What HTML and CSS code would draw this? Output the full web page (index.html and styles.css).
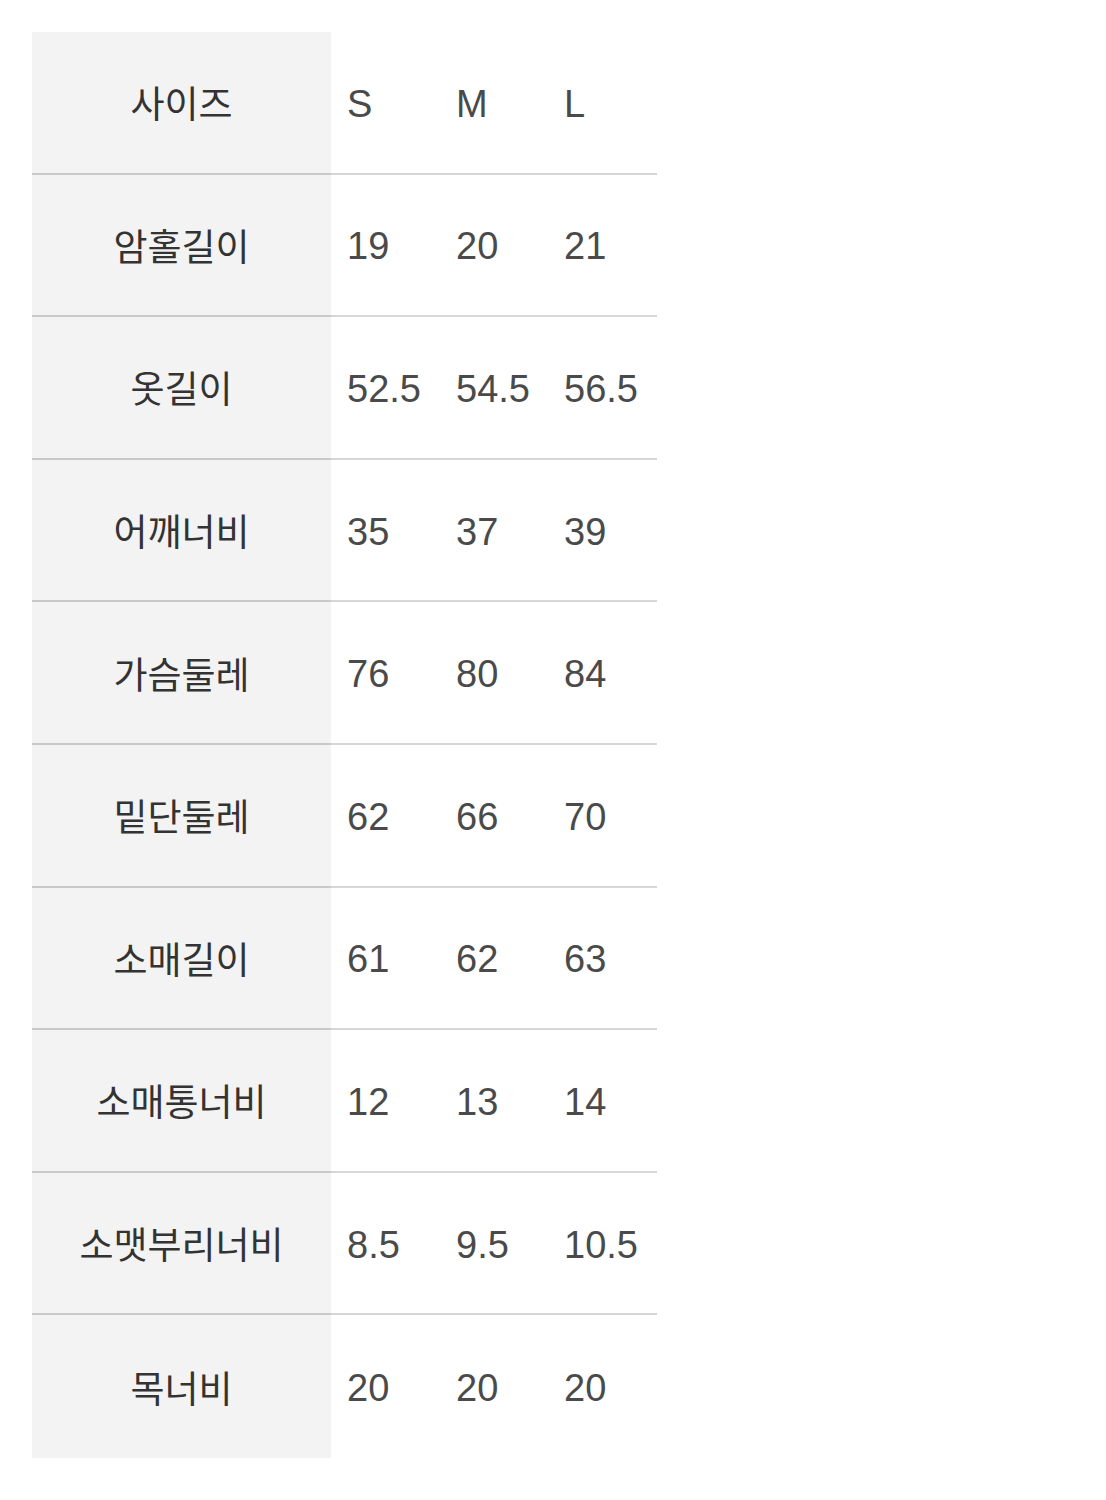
FILE: index.html
```html
<!DOCTYPE html>
<html lang="ko">
<head>
<meta charset="utf-8">
<title>사이즈</title>
<link rel="stylesheet" href="styles.css">
</head>
<body>
<div class="size-table">
  <div class="row"><div class="label">사이즈</div><div class="cell">S</div><div class="cell">M</div><div class="cell">L</div></div>
  <div class="row"><div class="label">암홀길이</div><div class="cell">19</div><div class="cell">20</div><div class="cell">21</div></div>
  <div class="row"><div class="label">옷길이</div><div class="cell">52.5</div><div class="cell">54.5</div><div class="cell">56.5</div></div>
  <div class="row"><div class="label">어깨너비</div><div class="cell">35</div><div class="cell">37</div><div class="cell">39</div></div>
  <div class="row"><div class="label">가슴둘레</div><div class="cell">76</div><div class="cell">80</div><div class="cell">84</div></div>
  <div class="row"><div class="label">밑단둘레</div><div class="cell">62</div><div class="cell">66</div><div class="cell">70</div></div>
  <div class="row"><div class="label">소매길이</div><div class="cell">61</div><div class="cell">62</div><div class="cell">63</div></div>
  <div class="row"><div class="label">소매통너비</div><div class="cell">12</div><div class="cell">13</div><div class="cell">14</div></div>
  <div class="row"><div class="label">소맷부리너비</div><div class="cell">8.5</div><div class="cell">9.5</div><div class="cell">10.5</div></div>
  <div class="row"><div class="label">목너비</div><div class="cell">20</div><div class="cell">20</div><div class="cell">20</div></div>
</div>
</body>
</html>
```
FILE: styles.css
```css
html, body {
  margin: 0;
  padding: 0;
  background: #ffffff;
}
body {
  padding: 32px;
  font-family: "Liberation Sans", "Noto Sans CJK KR", sans-serif;
}
.size-table {
  width: 625px;
  display: flex;
  flex-direction: column;
}
.row {
  height: 142.6px;
  box-sizing: border-box;
  display: grid;
  grid-template-columns: 299px 109px 108px 109px;
  border-bottom: 2px solid #d6d6d6;
}
.row:last-child {
  border-bottom: none;
}
.label {
  background: #f3f3f3;
  display: flex;
  align-items: center;
  justify-content: center;
  font-family: "Noto Sans CJK KR", sans-serif;
  font-size: 37px;
  letter-spacing: 0;
  color: #333333;
  border-bottom: 2px solid #c9c9c9;
  margin-bottom: -2px;
}
.row:last-child .label {
  border-bottom: none;
  margin-bottom: 0;
}
.cell {
  display: flex;
  align-items: center;
  padding-left: 16px;
  padding-top: 4px;
  font-size: 38px;
  color: #4a4a4a;
}
```
